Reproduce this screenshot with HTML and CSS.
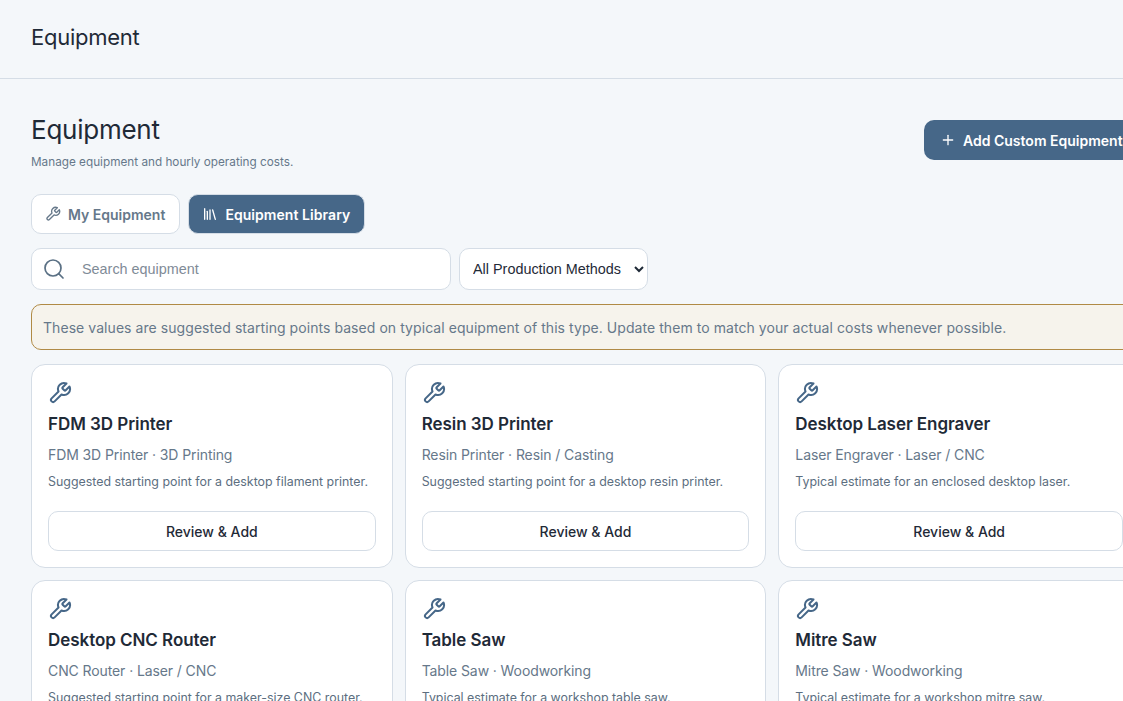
FILE: index.html
```html
<!DOCTYPE html>
<html lang="en">
<head>
    <meta charset="UTF-8">
    <title>Equipment</title>
    <link rel="stylesheet" href="styles.css">
</head>
<body>
    <svg class="icon-defs" width="0" height="0">
        <symbol id="wrench" viewBox="0 0 24 24">
            <path d="M14.7 6.3a1 1 0 0 0 0 1.4l1.6 1.6a1 1 0 0 0 1.4 0l3.77-3.77a6 6 0 0 1-7.94 7.94l-6.91 6.91a2.12 2.12 0 0 1-3-3l6.91-6.91a6 6 0 0 1 7.94-7.94l-3.76 3.76z"/>
        </symbol>
    </svg>
    <header class="topbar">
        <div class="topbar-title">Equipment</div>
    </header>
    <main class="content">
        <div class="page-head">
            <div>
                <h1>Equipment</h1>
                <p class="subtitle">Manage equipment and hourly operating costs.</p>
            </div>
            <button class="add-btn">
                <svg class="icon" viewBox="0 0 24 24"><path d="M5 12h14"/><path d="M12 5v14"/></svg>
                Add Custom Equipment
            </button>
        </div>
        <div class="tabs">
            <button class="tab">
                <svg class="icon"><use href="#wrench"/></svg>
                My Equipment
            </button>
            <button class="tab active">
                <svg class="icon" viewBox="0 0 24 24"><path d="m16 6 4 14"/><path d="M12 6v14"/><path d="M8 8v12"/><path d="M4 4v16"/></svg>
                Equipment Library
            </button>
        </div>
        <div class="filters">
            <div class="search">
                <svg class="search-icon" viewBox="0 0 24 24"><circle cx="11" cy="11" r="8"/><path d="m21 21-4.3-4.3"/></svg>
                <input type="text" placeholder="Search equipment">
            </div>
            <select class="method">
                <option>All Production Methods</option>
            </select>
        </div>
        <div class="notice">These values are suggested starting points based on typical equipment of this type. Update them to match your actual costs whenever possible.</div>
        <div class="grid">
            <div class="card">
                <svg class="card-icon"><use href="#wrench"/></svg>
                <h3>FDM 3D Printer</h3>
                <div class="meta">FDM 3D Printer · 3D Printing</div>
                <p class="desc">Suggested starting point for a desktop filament printer.</p>
                <button class="review">Review &amp; Add</button>
            </div>
            <div class="card">
                <svg class="card-icon"><use href="#wrench"/></svg>
                <h3>Resin 3D Printer</h3>
                <div class="meta">Resin Printer · Resin / Casting</div>
                <p class="desc">Suggested starting point for a desktop resin printer.</p>
                <button class="review">Review &amp; Add</button>
            </div>
            <div class="card">
                <svg class="card-icon"><use href="#wrench"/></svg>
                <h3>Desktop Laser Engraver</h3>
                <div class="meta">Laser Engraver · Laser / CNC</div>
                <p class="desc">Typical estimate for an enclosed desktop laser.</p>
                <button class="review">Review &amp; Add</button>
            </div>
            <div class="card">
                <svg class="card-icon"><use href="#wrench"/></svg>
                <h3>Desktop CNC Router</h3>
                <div class="meta">CNC Router · Laser / CNC</div>
                <p class="desc">Suggested starting point for a maker-size CNC router.</p>
                <button class="review">Review &amp; Add</button>
            </div>
            <div class="card">
                <svg class="card-icon"><use href="#wrench"/></svg>
                <h3>Table Saw</h3>
                <div class="meta">Table Saw · Woodworking</div>
                <p class="desc">Typical estimate for a workshop table saw.</p>
                <button class="review">Review &amp; Add</button>
            </div>
            <div class="card">
                <svg class="card-icon"><use href="#wrench"/></svg>
                <h3>Mitre Saw</h3>
                <div class="meta">Mitre Saw · Woodworking</div>
                <p class="desc">Typical estimate for a workshop mitre saw.</p>
                <button class="review">Review &amp; Add</button>
            </div>
        </div>
    </main>
</body>
</html>
```
FILE: styles.css
```css
html, body {
    height: 100%;
    overflow: hidden;
}
body {
    margin: 0;
    width: 1172px;
    background-color: #f4f7fa;
    color: #1f2a37;
    font-family: "Inter", "Liberation Sans", sans-serif;
}
button {
    font-family: inherit;
}
.icon-defs {
    display: none;
}
.icon, .card-icon, .search-icon {
    fill: none;
    stroke: currentColor;
    stroke-width: 2;
    stroke-linecap: round;
    stroke-linejoin: round;
}
.icon {
    width: 16px;
    height: 16px;
    flex-shrink: 0;
}
.topbar {
    height: 74px;
    padding-bottom: 4px;
    border-bottom: 1px solid #d5dde6;
    padding-left: 31px;
    display: flex;
    align-items: center;
}
.topbar-title {
    font-size: 22px;
    letter-spacing: -0.25px;
}
.content {
    padding: 33px 31px 0;
}
.page-head {
    display: flex;
    justify-content: space-between;
    align-items: flex-start;
    width: 1110px;
}
h1 {
    margin: 0;
    font-size: 26px;
    line-height: 36px;
    font-weight: 400;
    letter-spacing: -0.25px;
}
.subtitle {
    margin: 6px 0 0;
    font-size: 11.75px;
    line-height: 16px;
    color: #66788a;
}
.add-btn {
    width: 217px;
    height: 40px;
    margin-top: 8px;
    padding: 0 0 0 16px;
    display: flex;
    align-items: center;
    gap: 7px;
    background-color: #466788;
    color: #fff;
    border: none;
    border-radius: 10px;
    font-size: 14px;
    font-weight: 600;
    white-space: nowrap;
}
.tabs {
    display: flex;
    gap: 8px;
    margin-top: 24px;
}
.tab {
    height: 40px;
    padding: 0 14px 0 13px;
    display: flex;
    align-items: center;
    gap: 7px;
    background-color: #fff;
    color: #66788a;
    border: 1px solid #d5dde6;
    border-radius: 10px;
    font-size: 14px;
    font-weight: 600;
}
.tab.active {
    background-color: #466788;
    color: #fff;
    letter-spacing: 0.06px;
}
.filters {
    display: flex;
    gap: 8px;
    margin-top: 14px;
}
.search {
    width: 420px;
    height: 42px;
    box-sizing: border-box;
    display: flex;
    align-items: center;
    background-color: #fff;
    border: 1px solid #d5dde6;
    border-radius: 10px;
    padding-left: 10px;
}
.search-icon {
    width: 24px;
    height: 24px;
    color: #5a7084;
    stroke-width: 1.7;
}
.search input {
    border: none;
    outline: none;
    background: none;
    margin-left: 16px;
    padding: 0;
    flex: 1;
    font-family: "Liberation Sans", sans-serif;
    font-size: 14.4px;
}
.search input::placeholder {
    color: #7f8b97;
}
.method {
    width: 189px;
    height: 42px;
    padding: 0 9px;
    background-color: #fff;
    color: #1f2a37;
    border: 1px solid #d5dde6;
    border-radius: 10px;
    font-family: "Liberation Sans", sans-serif;
    font-size: 14.4px;
}
.notice {
    width: 1110px;
    height: 46px;
    box-sizing: border-box;
    margin-top: 14px;
    padding: 0 11px;
    display: flex;
    align-items: center;
    background-color: #f6f3ec;
    color: #66788a;
    border: 1px solid #b08a45;
    border-radius: 10px;
    font-size: 14px;
    letter-spacing: 0.06px;
}
.grid {
    display: grid;
    grid-template-columns: repeat(3, 361.67px);
    gap: 12px;
    margin-top: 14px;
}
.card {
    height: 204px;
    box-sizing: border-box;
    padding: 16px;
    background-color: #fff;
    border: 1px solid #d5dde6;
    border-radius: 14px;
}
.card-icon {
    display: block;
    width: 24px;
    height: 24px;
    color: #466788;
}
.card h3 {
    margin: 7px 0 0;
    font-size: 17px;
    line-height: 24px;
    font-weight: 600;
    letter-spacing: -0.05px;
}
.meta {
    margin-top: 9px;
    font-size: 14px;
    line-height: 20px;
    color: #66788a;
    letter-spacing: -0.1px;
}
.desc {
    margin: 8px 0 0;
    font-size: 12.4px;
    line-height: 18px;
    color: #5c6e80;
}
.review {
    display: block;
    width: 100%;
    height: 40px;
    margin-top: 20px;
    background-color: #fff;
    color: #1f2a37;
    border: 1px solid #d5dde6;
    border-radius: 10px;
    font-size: 14px;
    font-weight: 500;
}
```
